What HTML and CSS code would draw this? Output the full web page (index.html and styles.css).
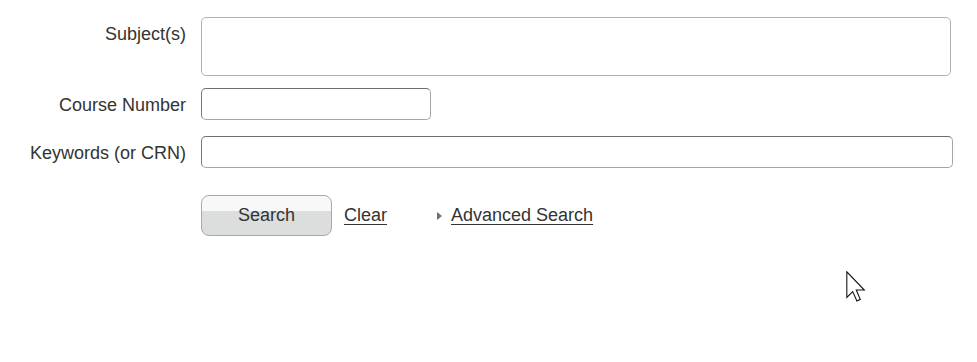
FILE: index.html
```html
<!DOCTYPE html>
<html>
<head>
<meta charset="utf-8">
<link rel="stylesheet" href="styles.css">
</head>
<body>
<form class="search-form">
  <div class="row row-subject">
    <label class="label label-top">Subject(s)</label>
    <div class="field field-subject"></div>
  </div>
  <div class="row row-course">
    <label class="label">Course Number</label>
    <div class="field field-course"></div>
  </div>
  <div class="row row-keywords">
    <label class="label">Keywords (or CRN)</label>
    <div class="field field-keywords"></div>
  </div>
  <div class="row row-actions">
    <span class="label"></span>
    <div class="actions">
      <button type="button" class="btn-search">Search</button>
      <a class="link link-clear" href="#">Clear</a>
      <span class="advanced">
        <span class="tri"></span>
        <a class="link" href="#">Advanced Search</a>
      </span>
    </div>
  </div>
</form>
<svg class="cursor" width="21" height="31" viewBox="0 0 13.5 20" xmlns="http://www.w3.org/2000/svg">
  <path d="M0.5,0.5 V17 L4.3,13.3 L7,19.3 L9.2,18.3 L6.6,12.3 H11.8 Z" fill="#fff" stroke="#111" stroke-width="0.7" stroke-linejoin="miter"/>
</svg>
</body>
</html>
```

FILE: styles.css
```css
html, body {
  margin: 0;
  padding: 0;
  background: #ffffff;
}
body {
  font-family: "Liberation Sans", Arial, sans-serif;
  font-size: 18px;
  color: #333333;
  width: 977px;
  height: 362px;
  overflow: hidden;
  position: relative;
}
.search-form {
  padding-top: 17px;
}
.row {
  display: flex;
  align-items: center;
}
.label {
  width: 186px;
  flex: 0 0 186px;
  text-align: right;
  margin-right: 15px;
  line-height: 21px;
  padding-top: 2px;
}
.label-top {
  align-self: flex-start;
  padding-top: 7px;
}
.field {
  box-sizing: border-box;
  background: #fff;
  border: 1px solid #a6a6a6;
  border-top-color: #6e6e6e;
  border-left-color: #7a7a7a;
  border-radius: 5px;
}
.field-subject {
  width: 750px;
  height: 59px;
  border-color: #b0b0b0;
}
.row-course {
  margin-top: 12px;
}
.field-course {
  width: 230px;
  height: 32px;
}
.row-keywords {
  margin-top: 16px;
}
.field-keywords {
  width: 752px;
  height: 32px;
}
.row-actions {
  margin-top: 27px;
}
.actions {
  display: flex;
  align-items: center;
}
.btn-search {
  box-sizing: border-box;
  width: 131px;
  height: 41px;
  border: 1px solid #a9a9a9;
  border-radius: 8px;
  background: linear-gradient(to bottom, #f8f8f8 0, #f8f8f8 15px, #dcdddd 15px, #dcdddd 100%);
  font-family: "Liberation Sans", Arial, sans-serif;
  font-size: 18px;
  color: #333333;
  padding: 0;
}
.link {
  color: #333333;
  text-decoration: underline;
  text-underline-offset: 3px;
}
.link-clear {
  margin-left: 12px;
}
.advanced {
  display: flex;
  align-items: center;
  margin-left: 50px;
}
.tri {
  width: 0;
  height: 0;
  border-top: 4px solid transparent;
  border-bottom: 4px solid transparent;
  border-left: 5px solid #707070;
  margin-right: 9px;
}
.cursor {
  position: absolute;
  left: 846px;
  top: 271px;
}
```
